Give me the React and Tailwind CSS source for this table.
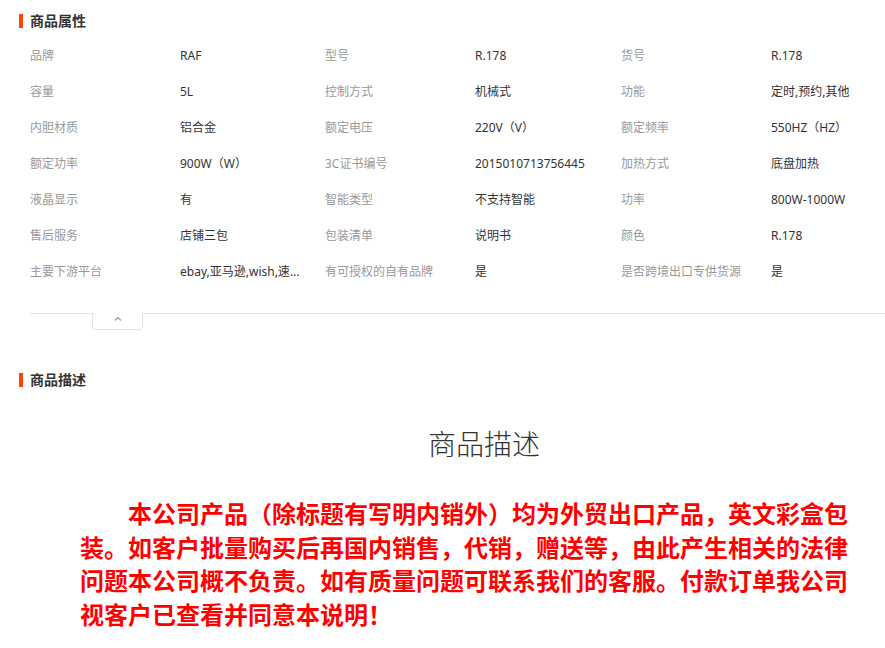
import React from "react";

const rows = [
  ["品牌", "RAF", "型号", "R.178", "货号", "R.178"],
  ["容量", "5L", "控制方式", "机械式", "功能", "定时,预约,其他"],
  ["内胆材质", "铝合金", "额定电压", "220V（V）", "额定频率", "550HZ（HZ）"],
  ["额定功率", "900W（W）", "3C证书编号", "2015010713756445", "加热方式", "底盘加热"],
  ["液晶显示", "有", "智能类型", "不支持智能", "功率", "800W-1000W"],
  ["售后服务", "店铺三包", "包装清单", "说明书", "颜色", "R.178"],
  ["主要下游平台", "ebay,亚马逊,wish,速卖通,独立站,LAZADA", "有可授权的自有品牌", "是", "是否跨境出口专供货源", "是"],
];

function Header({ title }) {
  return (
    <div className="flex items-center h-[20px] pl-[19px]">
      <div className="w-[4px] h-[14px] bg-[#ff4400]" />
      <div className="ml-[7px] text-[14px] font-bold text-[#333] leading-[20px]">{title}</div>
    </div>
  );
}

export default function App() {
  return (
    <div
      className="w-[885px] h-[648px] overflow-hidden bg-white"
      style={{ fontFamily: '"Noto Sans", "Noto Sans CJK SC", sans-serif' }}
    >
      <div className="pt-[11px]">
        <Header title="商品属性" />
      </div>
      <div className="pl-[30px] mt-[7px]">
        {rows.map((r, i) => (
          <div key={i} className="flex h-[36px] items-center text-[12px]">
            <div className="w-[150px] text-[#999]">{r[0]}</div>
            <div className="w-[145px] text-[#333]">
              <div className="max-w-[126px] truncate">{r[1]}</div>
            </div>
            <div className="w-[150px] text-[#999]">{r[2]}</div>
            <div className="w-[146px] text-[#333]">{r[3]}</div>
            <div className="w-[150px] text-[#999]">{r[4]}</div>
            <div className="text-[#333]">{r[5]}</div>
          </div>
        ))}
      </div>
      <div className="ml-[30px] mt-[23px] border-t border-[#e5e5e5]">
        <div className="ml-[62px] w-[51px] h-[17px] -mt-px border border-t-0 border-[#e5e5e5] rounded-b-[4px] bg-white flex justify-center">
          <svg width="10" height="8" viewBox="0 0 10 8" className="mt-[2px]">
            <path d="M2 5.5 L5 2.5 L8 5.5" fill="none" stroke="#999" strokeWidth="1.2" />
          </svg>
        </div>
      </div>
      <div className="mt-[40px]">
        <Header title="商品描述" />
      </div>
      <div className="ml-[80px] w-[808px]">
        <div
          className="mt-[38px] text-center text-[28px] text-[#333] leading-[36px] font-light"
          style={{ fontFamily: '"Liberation Serif", "Noto Sans CJK SC", serif' }}
        >
          商品描述
        </div>
        <p
          className="mt-[32px] w-[780px] text-[24px] font-bold text-[#ff0000] leading-[33.7px] indent-[48px]"
          style={{ fontFamily: '"Noto Sans CJK SC", sans-serif' }}
        >
          本公司产品（除标题有写明内销外）均为外贸出口产品，英文彩盒包装。如客户批量购买后再国内销售，代销，赠送等，由此产生相关的法律问题本公司概不负责。如有质量问题可联系我们的客服。付款订单我公司视客户已查看并同意本说明！
        </p>
      </div>
    </div>
  );
}
